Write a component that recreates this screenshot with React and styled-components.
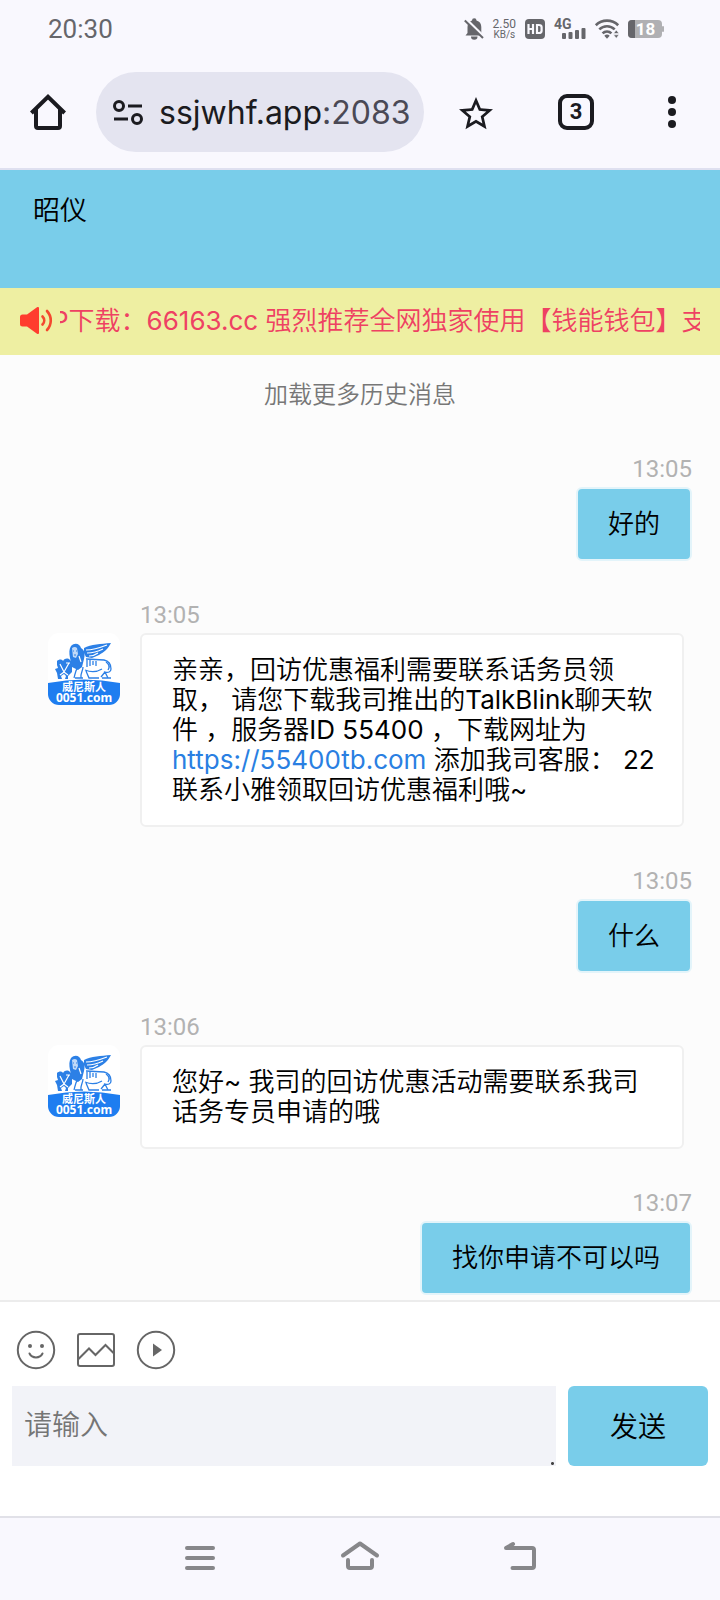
import { useState } from "react";
import styled, { createGlobalStyle, css } from "styled-components";

const GlobalStyle = createGlobalStyle`
    * {
        box-sizing: border-box;
    }
    body {
        margin: 0;
        background: #f9f8fe;
        font-family: Roboto, "Noto Sans CJK SC DemiLight", "Noto Sans CJK SC", sans-serif;
    }
    button {
        margin: 0;
        padding: 0;
        border: none;
        background: none;
        color: inherit;
        font-family: inherit;
    }
    svg {
        display: block;
        overflow: visible;
    }
`;

const Page = styled.div`
    min-height: 100vh;
    display: flex;
    flex-direction: column;
`;

/* status bar */

const StatusBar = styled.div`
    height: 56px;
    padding: 2px 56px 0 48px;
    display: flex;
    align-items: center;
    justify-content: space-between;
    color: #66666b;
`;
const Clock = styled.time`
    font-size: 26px;
    line-height: 30px;
`;
const StatusIcons = styled.div`
    display: flex;
    align-items: center;
    gap: 9px;
`;
const NetSpeed = styled.div`
    display: flex;
    flex-direction: column;
    align-items: center;
    font-size: 12px;
    line-height: 12px;
`;
const NetUnit = styled.span`
    font-size: 10px;
    line-height: 10px;
`;

/* browser toolbar */

const Toolbar = styled.div`
    height: 114px;
    padding: 0 34px 0 30px;
    display: flex;
    align-items: center;
    border-bottom: 2px solid #dfe0f0;
    color: #1b1b20;
`;
const AddressBar = styled.div`
    flex: 1;
    min-width: 0;
    height: 80px;
    margin: 0 34px 0 30px;
    padding: 2px 12px 0 17px;
    display: flex;
    align-items: center;
    gap: 16px;
    border-radius: 40px;
    background: #e4e4f0;
`;
const Url = styled.span`
    font-family: Inter, sans-serif;
    font-size: 32px;
    line-height: 40px;
    white-space: nowrap;
`;
const Port = styled.span`
    color: #4a4955;
`;
const Actions = styled.div`
    display: flex;
    align-items: center;
    gap: 64px;
`;
const TabsButton = styled.button`
    width: 36px;
    height: 36px;
    border: 4px solid #1b1b20;
    border-radius: 9px;
    font-size: 22px;
    line-height: 28px;
    font-weight: 700;
`;

/* chat */

const Header = styled.header`
    height: 118px;
    padding: 20px 33px;
    background: #79cdea;
`;
const Name = styled.h1`
    margin: 0;
    font-size: 27px;
    line-height: 42px;
    font-weight: 350;
    color: #000;
`;
const Notice = styled.div`
    height: 67px;
    padding: 0 20px 2px;
    display: flex;
    align-items: center;
    gap: 8px;
    background: #eeefa2;
`;
const NoticeTrack = styled.div`
    flex: 1;
    min-width: 0;
    overflow: hidden;
`;
const NoticeText = styled.div`
    margin-left: -8px;
    font-family: Inter, "Noto Sans CJK SC DemiLight", "Noto Sans CJK SC", sans-serif;
    font-size: 26px;
    line-height: 40px;
    white-space: nowrap;
    color: #ee4163;
`;
const Chat = styled.main`
    flex: 1;
    padding: 20px 28px 5px 48px;
    display: flex;
    flex-direction: column;
    gap: 36px;
    background: #fcfcfc;
`;
const LoadMore = styled.button`
    align-self: center;
    margin-left: -20px;
    font-size: 24px;
    line-height: 40px;
    font-weight: 350;
    color: #777;
`;
const Message = styled.div`
    display: flex;
    align-items: flex-start;
    gap: 20px;
    ${(props) =>
        props.$mine
            ? css`
                  justify-content: flex-end;
              `
            : css`
                  padding-right: 8px;
              `}
`;
const AvatarBox = styled.div`
    padding-top: 36px;
`;
const MessageBody = styled.div`
    ${(props) =>
        props.$mine
            ? css`
                  text-align: right;
              `
            : css`
                  flex: 1;
              `}
`;
const Time = styled.time`
    display: block;
    font-size: 24px;
    line-height: 36px;
    color: #b2b2b2;
`;
const Bubble = styled.div`
    padding: 20px ${(props) => (props.$mine ? "30px" : "24px")} 20px 30px;
    border: 2px solid ${(props) => (props.$mine ? "#e3f4fa" : "#f0f0f0")};
    border-radius: 6px;
    background: ${(props) => (props.$mine ? "#79cdea" : "#fff")};
    font-family: Inter, "Noto Sans CJK SC DemiLight", "Noto Sans CJK SC", sans-serif;
    font-size: 26px;
    line-height: 30px;
    color: #000;
`;
const Link = styled.a`
    color: #2a7fe2;
    text-decoration: none;
`;

/* composer */

const Composer = styled.form`
    padding: 28px 12px 50px;
    border-top: 2px solid #ececec;
    background: #fff;
`;
const Tools = styled.div`
    display: flex;
    gap: 20px;
    padding: 0 4px 16px;
    color: #666;
`;
const InputRow = styled.div`
    display: flex;
    gap: 12px;
`;
const Input = styled.textarea`
    flex: 1;
    min-width: 0;
    height: 80px;
    padding: 20px 12px;
    border: none;
    border-radius: 0;
    outline: none;
    resize: none;
    background: radial-gradient(#444 1px, transparent 2px) right 1px bottom 0 /
        5px 5px no-repeat #f2f3f8;
    font-family: inherit;
    font-size: 28px;
    line-height: 40px;
    font-weight: 350;
    &::placeholder {
        color: #757575;
    }
`;
const SendButton = styled.button`
    width: 140px;
    height: 80px;
    padding-bottom: 3px;
    border-radius: 6px;
    background: #79cdea;
    font-size: 28px;
    font-weight: 350;
    color: #000;
`;

const NavBar = styled.nav`
    height: 84px;
    padding-bottom: 2px;
    display: flex;
    align-items: center;
    justify-content: center;
    gap: 120px;
    border-top: 2px solid #e1e1e8;
    background: #f9f8fe;
    color: #87878a;
`;

const StatusGlyphs = () => (
    <StatusIcons>
        <svg width="20" height="22" viewBox="0 0 20 22" fill="currentColor">
            <path d="M8 2.600a2.200 2.200 0 0 1 4.500 0c3.200.8 4.800 3.300 4.800 6.400v6l1.200 2.500H1.500L3.500 15V9c0-3.100 1.500-5.600 4.500-6.400z" />
            <path d="M7 18.500h6.500a3.200 3.200 0 0 1-6.500 0z" />
            <path d="M2.200 1.200 19.800 18.500" stroke="#f9f8fe" strokeWidth="2.500" />
            <path d="M.8 2.500 19 20" stroke="currentColor" strokeWidth="2" />
        </svg>
        <NetSpeed>
            <span>2.50</span>
            <NetUnit>KB/s</NetUnit>
        </NetSpeed>
        <svg width="20" height="20" viewBox="0 0 20 20">
            <rect width="20" height="20" rx="4" fill="currentColor" />
            <path
                d="M3.500 5v10M8 5v10M3.500 10H8M12 6v8h1.800c2 0 2.800-.8 2.800-2.300V8.300c0-1.500-.8-2.300-2.800-2.300z"
                fill="none"
                stroke="#f9f8fe"
                strokeWidth="2.200"
            />
        </svg>
        <svg width="32" height="20" viewBox="0 0 32 20" fill="currentColor">
            <text x="0" y="10" fontSize="14" fontWeight="700">
                4G
            </text>
            <rect x="8" y="14" width="4" height="6" rx="1" />
            <rect x="14.500" y="13" width="4" height="7" rx="1" />
            <rect x="21" y="11" width="4" height="9" rx="1" />
            <rect x="27.500" y="9" width="4" height="11" rx="1" />
        </svg>
        <svg width="24" height="20" viewBox="0 0 24 20" fill="none">
            <g stroke="currentColor" strokeWidth="2.600">
                <path d="M.8 6.200a16 16 0 0 1 22.400 0" />
                <path d="M4.300 10.400a11 11 0 0 1 15.400 0" />
                <path d="M7.600 14.400a6 6 0 0 1 8.800 0" />
            </g>
            <path d="M9.300 16.700 12 19.700l2.700-3a4 4 0 0 0-5.400 0z" fill="currentColor" />
            <path
                d="M18.500 14.500h5.500l-2.700-3.500zM18.500 15.800h5.500l-2.700 3.500z"
                fill="currentColor"
                stroke="#f9f8fe"
                strokeWidth=".6"
            />
        </svg>
        <svg width="36" height="18" viewBox="0 0 36 18">
            <rect width="34" height="18" rx="4" fill="#b0b0b3" />
            <path d="M4 0h3v18H4a4 4 0 0 1-4-4V4a4 4 0 0 1 4-4z" fill="#66666b" />
            <rect x="34" y="6" width="2" height="6" rx="1" fill="#b0b0b3" />
            <text
                x="17.500"
                y="15"
                textAnchor="middle"
                fontSize="17"
                fontWeight="700"
                fill="#fff"
            >
                18
            </text>
        </svg>
    </StatusIcons>
);

const Avatar = () => (
    <svg width="72" height="72" viewBox="0 0 72 72" role="img" aria-label="威尼斯人">
        <rect width="72" height="72" rx="11" fill="#fff" />
        <path d="M0 50q36-7 72 0v11a11 11 0 0 1-11 11H11A11 11 0 0 1 0 61z" fill="#1e7df0" />
        {/* winged lion with shield */}
        <g fill="#2c80e6">
            <path d="M36 15c7-4 17-4 27-5-3 6-7 9-12 12l-7 3-6-1-2-4z" />
            <path d="M23 13c4-4 9-2 10 2 4 2 4 7 3 11l-2 8-4 3-6-3-2-9c-1-5-1-9 1-12z" />
            <path d="M9 28c2-2 5-2 6 0 2-3 5-3 7-1l2 2v10l-4 4v3h-3l1-3-2-2-3 2 1 3h-4l-1-6-2-4 3-1-1-3z" />
        </g>
        <path
            d="M30 34c-3 4-3 8-4 11M35 34c0 4-3 7-2 11M38 26l18 1c5 1 7 5 7 9 0 3-3 4-6 3l3 6M57 39l-4 5M37 37c5 2 12 2 17-1M27 45h8M38 38l3 7h10M54 45h9"
            fill="none"
            stroke="#2c80e6"
            strokeWidth="1.300"
        />
        <path
            d="M39 27v7M42 27v6M45 28v4M48 28v5M58 29c3 2 4 5 2 8"
            stroke="#2c80e6"
            strokeWidth="1.300"
            fill="none"
        />
        <path d="M24 15q3-2 5 0l1 6-2 4-3-1z" fill="#fff" opacity=".7" />
        <path
            d="M25 18h1M28 18h1M26 22h2"
            stroke="#2c80e6"
            strokeWidth="1"
            fill="none"
        />
        <path
            d="M31 23l2 6M38 17q8 0 21-5M39 20q8 0 16-4M41 23q5 0 9-3M12 31l4 8 5-9M18 30h4M12 42l4-3 4 3"
            stroke="#fff"
            strokeWidth="1.200"
            fill="none"
        />
        <text textAnchor="middle" fontWeight="700" fill="#fff">
            <tspan x="36" y="58" fontSize="11" fontFamily='"Noto Sans CJK SC", sans-serif'>
                威尼斯人
            </tspan>
            <tspan x="36" y="69" fontSize="12" fontFamily='"Noto Sans", sans-serif'>
                0051.com
            </tspan>
        </text>
    </svg>
);

const messages = [
    { id: 1, mine: true, time: "13:05", text: "好的" },
    {
        id: 2,
        time: "13:05",
        text: (
            <>
                亲亲，回访优惠福利需要联系话务员领取， 请您下载我司推出的TalkBlink聊天软件
                ，服务器ID 55400 ，下载网址为
                <br />
                <Link href="https://55400tb.com">https://55400tb.com</Link>{" "}
                添加我司客服： 22
                <br />
                联系小雅领取回访优惠福利哦~
            </>
        ),
    },
    { id: 3, mine: true, time: "13:05", text: "什么" },
    {
        id: 4,
        time: "13:06",
        text: "您好~ 我司的回访优惠活动需要联系我司话务专员申请的哦",
    },
    { id: 5, mine: true, time: "13:07", text: "找你申请不可以吗" },
];

const App = () => {
    const [draft, setDraft] = useState("");

    return (
        <Page lang="zh-CN">
            <GlobalStyle />
            <StatusBar>
                <Clock>20:30</Clock>
                <StatusGlyphs />
            </StatusBar>
            <Toolbar>
                <button type="button" aria-label="Home">
                    <svg
                        width="36"
                        height="36"
                        viewBox="0 0 36 36"
                        fill="none"
                        stroke="currentColor"
                        strokeWidth="4"
                    >
                        <path d="M1.400 19 18 2.800 34.600 19" />
                        <path d="M6 15v17a2 2 0 0 0 2 2h20a2 2 0 0 0 2-2V15" />
                    </svg>
                </button>
                <AddressBar>
                    <svg
                        width="30"
                        height="26"
                        viewBox="0 0 30 26"
                        fill="none"
                        stroke="currentColor"
                        strokeWidth="3"
                    >
                        <circle cx="6" cy="6" r="4.500" />
                        <path d="M15 6h14M1 19h14" />
                        <circle cx="24" cy="19" r="4.500" />
                    </svg>
                    <Url>
                        ssjwhf.app<Port>:2083</Port>
                    </Url>
                </AddressBar>
                <Actions>
                    <button type="button" aria-label="Bookmark">
                        <svg
                            width="36"
                            height="36"
                            viewBox="1.400 .240 21.200 21.200"
                            fill="currentColor"
                        >
                            <path d="M22 9.240l-7.190-.62L12 2 9.190 8.630 2 9.240l5.460 4.730L5.820 21 12 17.270 18.180 21l-1.630-7.030zM12 15.400l-3.760 2.270 1-4.280-3.320-2.880 4.380-.38L12 6.100l1.710 4.040 4.380.38-3.320 2.880 1 4.280z" />
                        </svg>
                    </button>
                    <TabsButton type="button">3</TabsButton>
                    <button type="button" aria-label="Menu">
                        <svg width="28" height="36" viewBox="0 0 28 36" fill="currentColor">
                            <circle cx="14" cy="6" r="4" />
                            <circle cx="14" cy="18" r="4" />
                            <circle cx="14" cy="30" r="4" />
                        </svg>
                    </button>
                </Actions>
            </Toolbar>
            <Header>
                <Name>昭仪</Name>
            </Header>
            <Notice>
                <svg width="32" height="28" viewBox="0 0 32 28" fill="#ff3d2e">
                    <path d="M2.500 7.500H7L17 .3c1-.7 2-.3 2 1v24.400c0 1.300-1 1.700-2 1L7 19.500H2.500a2.500 2.500 0 0 1-2.500-2.500v-7a2.500 2.500 0 0 1 2.500-2.500z" />
                    <path
                        d="M22.500 9.500c2.300 2.400 2.300 5.600 0 8M27 4c5 5.400 5 13.600 0 19"
                        fill="none"
                        stroke="#f4482f"
                        strokeWidth="2.600"
                        strokeLinecap="round"
                    />
                </svg>
                <NoticeTrack>
                    <NoticeText>
                        P下载：66163.cc 强烈推荐全网独家使用【钱能钱包】支付
                    </NoticeText>
                </NoticeTrack>
            </Notice>
            <Chat>
                <LoadMore type="button">加载更多历史消息</LoadMore>
                {messages.map((m) => (
                    <Message key={m.id} $mine={m.mine}>
                        {!m.mine && (
                            <AvatarBox>
                                <Avatar />
                            </AvatarBox>
                        )}
                        <MessageBody $mine={m.mine}>
                            <Time>{m.time}</Time>
                            <Bubble $mine={m.mine}>{m.text}</Bubble>
                        </MessageBody>
                    </Message>
                ))}
            </Chat>
            <Composer onSubmit={(e) => e.preventDefault()}>
                <Tools>
                    <button type="button" aria-label="表情">
                        <svg
                            width="40"
                            height="40"
                            viewBox="0 0 40 40"
                            fill="none"
                            stroke="currentColor"
                            strokeWidth="2"
                        >
                            <circle cx="20" cy="20" r="18.200" />
                            <path d="M13.500 23.500c2.500 5.200 10.500 5.200 13 0" strokeLinecap="round" />
                            <circle cx="14" cy="16" r="2" fill="currentColor" stroke="none" />
                            <circle cx="26" cy="16" r="2" fill="currentColor" stroke="none" />
                        </svg>
                    </button>
                    <button type="button" aria-label="图片">
                        <svg
                            width="40"
                            height="40"
                            viewBox="0 0 40 40"
                            fill="none"
                            stroke="currentColor"
                            strokeWidth="2"
                        >
                            <rect x="2" y="4" width="36" height="32" rx="2" />
                            <path d="M2.500 29 13 18.500l6.500 6.500L29.500 15l8 8" />
                        </svg>
                    </button>
                    <button type="button" aria-label="视频">
                        <svg
                            width="40"
                            height="40"
                            viewBox="0 0 40 40"
                            fill="none"
                            stroke="currentColor"
                            strokeWidth="2"
                        >
                            <circle cx="20" cy="20" r="18.200" />
                            <path d="M17 13.500v13l9-6.500z" fill="currentColor" stroke="none" />
                        </svg>
                    </button>
                </Tools>
                <InputRow>
                    <Input
                        aria-label="请输入"
                        placeholder="请输入"
                        value={draft}
                        onChange={(e) => setDraft(e.target.value)}
                    />
                    <SendButton type="submit">发送</SendButton>
                </InputRow>
            </Composer>
            <NavBar>
                <button type="button" aria-label="Recent apps">
                    <svg
                        width="40"
                        height="32"
                        viewBox="0 0 40 32"
                        stroke="currentColor"
                        strokeWidth="4"
                        strokeLinecap="round"
                    >
                        <path d="M7 6h26M7 16h26M7 26h26" />
                    </svg>
                </button>
                <button type="button" aria-label="Home screen">
                    <svg
                        width="40"
                        height="32"
                        viewBox="0 0 40 32"
                        fill="none"
                        stroke="currentColor"
                        strokeWidth="4"
                        strokeLinecap="round"
                        strokeLinejoin="round"
                    >
                        <path d="M3 13.500 20 1.500 37 13.500" />
                        <path d="M8 18v6a2 2 0 0 0 2 2h20a2 2 0 0 0 2-2v-6" />
                    </svg>
                </button>
                <button type="button" aria-label="Back">
                    <svg
                        width="40"
                        height="32"
                        viewBox="0 0 40 32"
                        fill="none"
                        stroke="currentColor"
                        strokeWidth="4"
                        strokeLinecap="round"
                        strokeLinejoin="round"
                    >
                        <path d="M12.500 26H32a2 2 0 0 0 2-2V8a2 2 0 0 0-2-2H6l7-4" />
                    </svg>
                </button>
            </NavBar>
        </Page>
    );
};

export default App;
